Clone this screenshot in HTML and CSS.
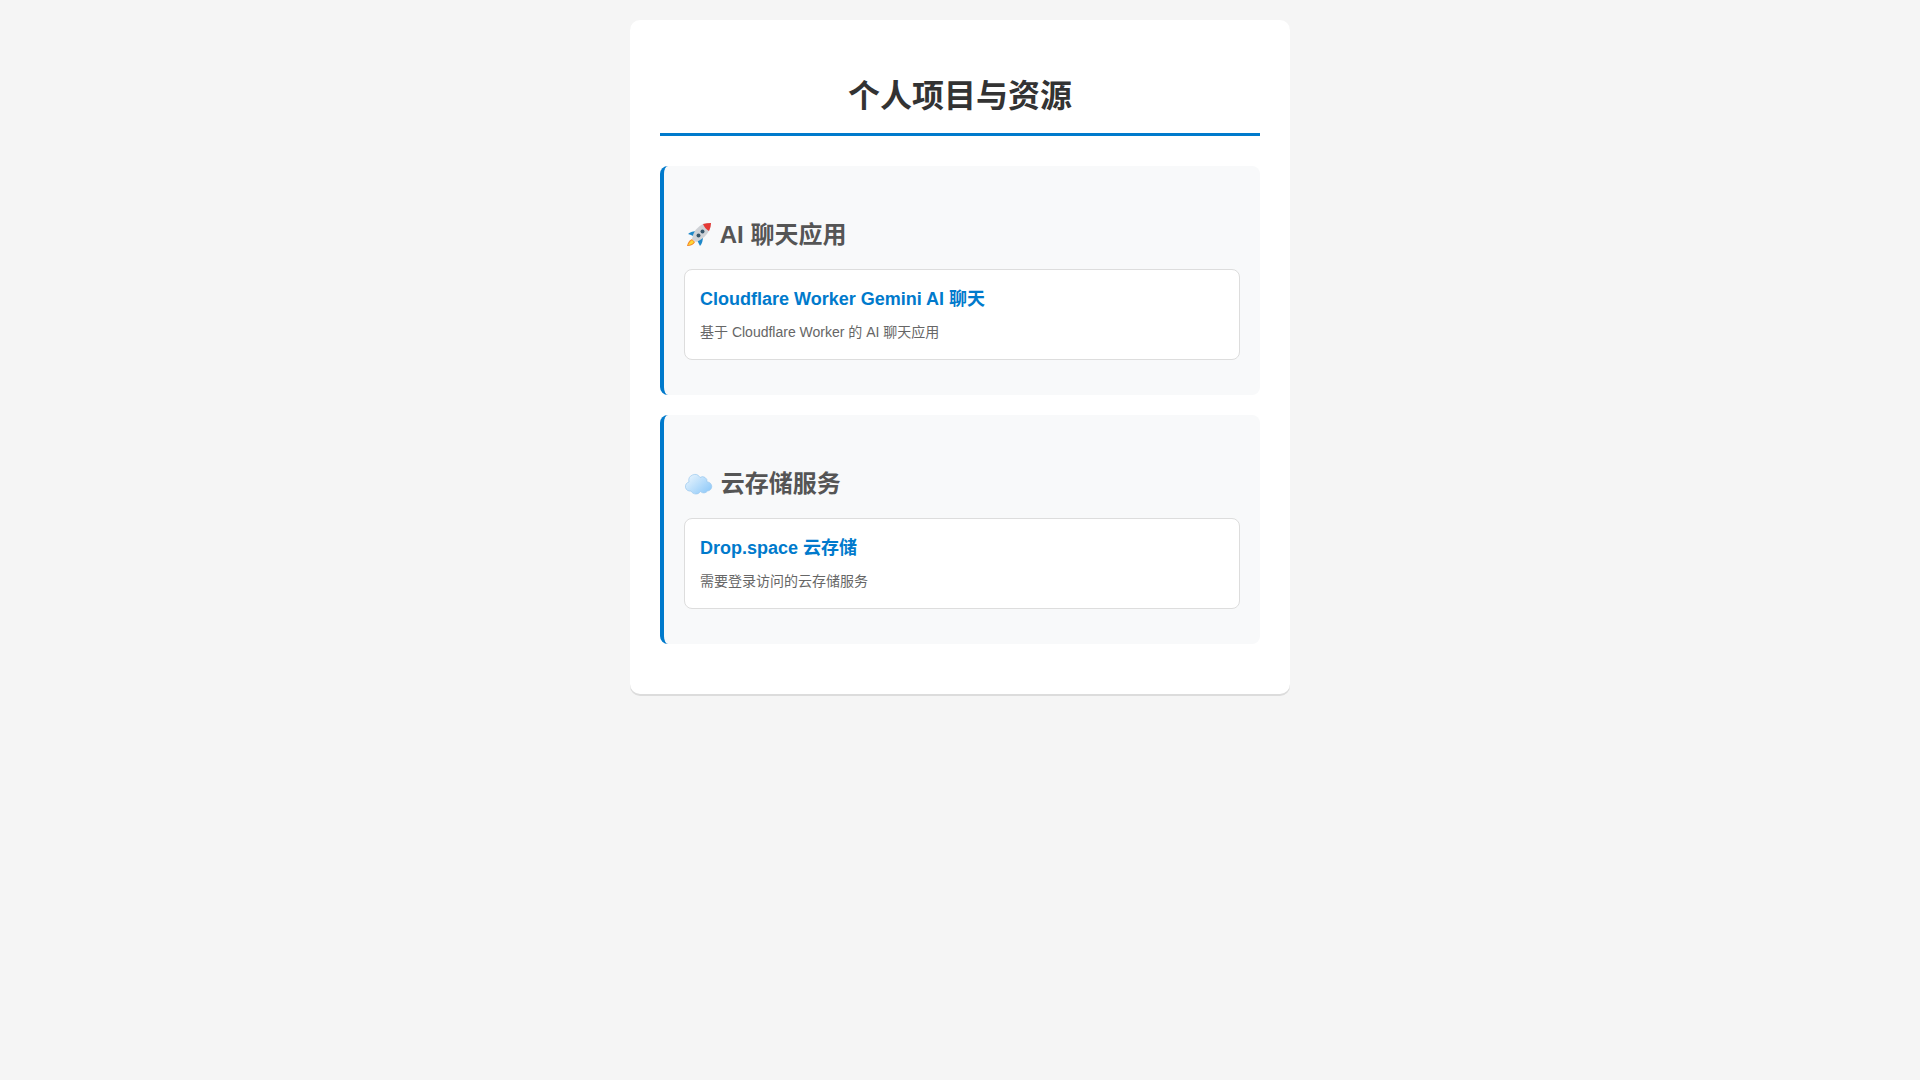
FILE: index.html
```html
<!DOCTYPE html>
<html lang="zh-CN">
<head>
    <meta charset="UTF-8">
    <meta name="viewport" content="width=device-width, initial-scale=1.0">
    <title>个人项目与资源</title>
    <link rel="stylesheet" href="styles.css">
</head>
<body>
    <div class="container">
        <h1>个人项目与资源</h1>

        <div class="section">
            <h2>
                <svg class="icon" viewBox="0 0 28 28" aria-hidden="true">
                    <path d="M2 25 Q3 20 7 18 L10 21 Q8 25 2 25 Z" fill="#f4801f"/>
                    <path d="M3 24 Q5 20 7 19 L9 21 Q7 24 3 24 Z" fill="#fdd835"/>
                    <path d="M10 16 L6 14 L3 13 Q6 10 13 10 Z" fill="#1e88c9"/>
                    <path d="M12 19 L13 21 L15 25 Q18 22 18 15 Z" fill="#1e88c9"/>
                    <path d="M7 18 Q9 7 18 3 Q22 2 26 2 Q25 15 11 21 Z" fill="#cfd2d6"/>
                    <path d="M18 3 Q22 2 26 2 Q26 6 24 10 Q20 8 18 3 Z" fill="#e53935"/>
                    <circle cx="17.5" cy="10.5" r="2" fill="#37566b"/>
                    <circle cx="13.5" cy="14.5" r="2" fill="#37566b"/>
                </svg>
                AI 聊天应用
            </h2>
            <ul class="link-list">
                <li>
                    <a href="#">Cloudflare Worker Gemini AI 聊天</a>
                    <div class="description">基于 Cloudflare Worker 的 AI 聊天应用</div>
                </li>
            </ul>
        </div>

        <div class="section">
            <h2>
                <svg class="icon" viewBox="0 0 28 28" aria-hidden="true">
                    <defs>
                        <linearGradient id="cloud" gradientUnits="userSpaceOnUse" x1="5" y1="5" x2="22" y2="24">
                            <stop offset="0" stop-color="#e3f2fd"/>
                            <stop offset="1" stop-color="#90caf9"/>
                        </linearGradient>
                    </defs>
                    <path d="M6 21 A4.6 4.6 0 0 1 4 12 A6 6 0 0 1 15 7.500 A4.500 4.500 0 0 1 22 12 A4.500 4.500 0 0 1 22.500 21 A4.500 4.500 0 0 1 15.500 21.500 A5.500 5.500 0 0 1 6 21 Z" fill="url(#cloud)" stroke="#9cc8ee" stroke-width="0.7"/>
                </svg>
                云存储服务
            </h2>
            <ul class="link-list">
                <li>
                    <a href="#">Drop.space 云存储</a>
                    <div class="description">需要登录访问的云存储服务</div>
                </li>
            </ul>
        </div>
    </div>
</body>
</html>
```
FILE: styles.css
```css
body {
    font-family: "Liberation Sans", "Noto Sans CJK SC", sans-serif;
    max-width: 660px;
    margin: 0 auto;
    padding: 20px;
    line-height: 1.6;
    background-color: #f5f5f5;
}

.container {
    background: white;
    padding: 30px;
    border-radius: 10px;
    box-shadow: 0 2px 0 rgba(0,0,0,0.1);
}

h1 {
    color: #333;
    text-align: center;
    border-bottom: 3px solid #007acc;
    padding-bottom: 10px;
    margin-bottom: 30px;
}

h2 {
    color: #555;
    margin-top: 30px;
    margin-bottom: 15px;
}

.icon {
    width: 28px;
    height: 28px;
    margin: 0 1px;
    vertical-align: -6px;
}

.section {
    margin: 20px 0;
    padding: 20px;
    background: #f8f9fa;
    border-left: 4px solid #007acc;
    border-radius: 8px;
}

.link-list {
    list-style: none;
    margin: 0;
    padding: 0;
}

.link-list li {
    margin: 15px 0;
    padding: 15px;
    background: white;
    border: 1px solid #ddd;
    border-radius: 8px;
}

.link-list a {
    color: #007acc;
    text-decoration: none;
    font-weight: bold;
    font-size: 18px;
}

.link-list a:hover {
    text-decoration: underline;
}

.description {
    color: #666;
    font-size: 14px;
    line-height: 24px;
    margin-top: 6px;
}
```
